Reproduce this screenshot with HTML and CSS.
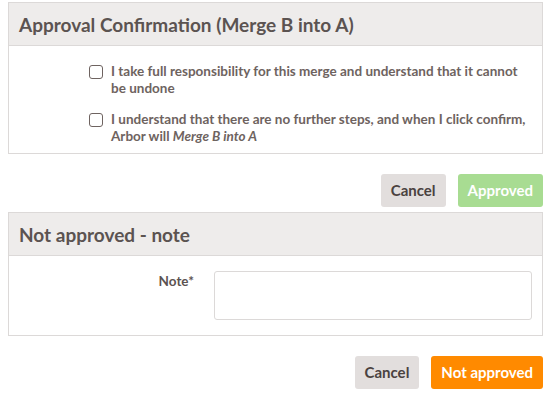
FILE: index.html
```html
<!DOCTYPE html>
<html lang="en">
<head>
    <meta charset="UTF-8">
    <title>Merge approval</title>
    <link rel="stylesheet" href="styles.css">
</head>
<body>
    <div class="panel">
        <h2 class="panel-header">Approval Confirmation (Merge B into A)</h2>
        <div class="panel-body checks">
            <label class="check-row">
                <span class="checkbox"></span>
                <span>I take full responsibility for this merge and understand that it cannot be undone</span>
            </label>
            <label class="check-row">
                <span class="checkbox"></span>
                <span>I understand that there are no further steps, and when I click confirm, Arbor will <em>Merge B into A</em></span>
            </label>
        </div>
    </div>
    <div class="actions">
        <button class="btn btn-cancel">Cancel</button>
        <button class="btn btn-approved">Approved</button>
    </div>

    <div class="panel">
        <h2 class="panel-header">Not approved - note</h2>
        <div class="panel-body field-row">
            <label class="field-label">Note*</label>
            <textarea class="field-input"></textarea>
        </div>
    </div>
    <div class="actions">
        <button class="btn btn-cancel">Cancel</button>
        <button class="btn btn-reject">Not approved</button>
    </div>
</body>
</html>
```

FILE: styles.css
```css
body {
    font-family: 'Lato', 'Open Sans', sans-serif;
    margin: 0;
    padding: 2px 14px 0 8px;
    background: #ffffff;
    color: #6e6360;
}
.panel {
    border: 1px solid #dcd9d8;
    background: #ffffff;
}
.panel-header {
    margin: 0;
    height: 42px;
    padding: 0 10px;
    display: flex;
    align-items: center;
    background: #eeeceb;
    border-bottom: 1px solid #dcd9d8;
    color: #5b5351;
    font-size: 19px;
    font-weight: 700;
}
.checks {
    display: flex;
    flex-direction: column;
    gap: 14px;
    padding: 17px 10px 8px 80px;
}
.check-row {
    display: flex;
    gap: 8px;
    font-size: 13.5px;
    font-weight: 700;
    line-height: 17px;
}
.check-row em {
    font-weight: 700;
}
.checkbox {
    flex: 0 0 14px;
    height: 14px;
    margin-top: 2px;
    box-sizing: border-box;
    border: 1.5px solid #6e6360;
    border-radius: 3px;
}
.field-row {
    display: flex;
    gap: 20px;
    padding: 15px 10px 15px 0;
}
.field-label {
    flex: 0 0 185px;
    text-align: right;
    font-size: 13.5px;
    font-weight: 700;
    color: #5b5351;
    padding-top: 2px;
}
.field-input {
    flex: 1;
    height: 49px;
    box-sizing: border-box;
    margin: 0;
    border: 1px solid #dcd9d8;
    border-radius: 3px;
    resize: none;
}
.actions {
    display: flex;
    justify-content: flex-end;
    gap: 12px;
    margin: 20px 0 5px;
}
.btn {
    height: 33px;
    padding: 0 10px 2px;
    border: none;
    border-radius: 3px;
    font-family: inherit;
    font-size: 15px;
    font-weight: 700;
    color: #ffffff;
}
.btn-cancel {
    background: #e2dedd;
    color: #4a4240;
}
.btn-approved {
    background: #a8dc92;
}
.btn-reject {
    background: #ff8a00;
}
```
